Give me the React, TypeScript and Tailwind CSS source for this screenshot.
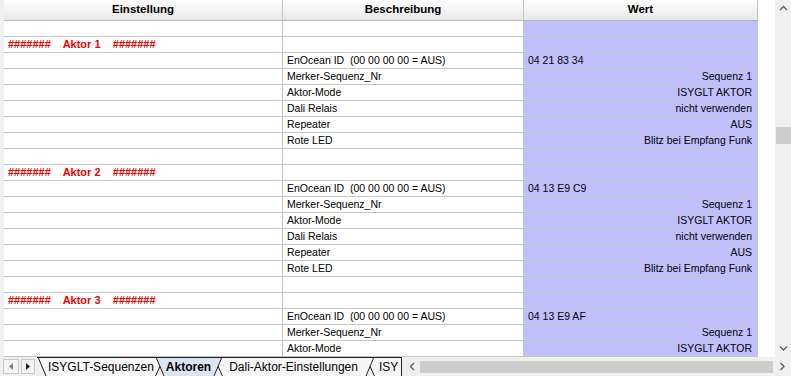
import React from 'react';

type Row =
  | { kind: 'empty' }
  | { kind: 'title'; n: number }
  | { kind: 'prop'; desc: string; val: string; left?: boolean };

const props = (id: string): Row[] => [
  { kind: 'prop', desc: 'EnOcean ID  (00 00 00 00 = AUS)', val: id, left: true },
  { kind: 'prop', desc: 'Merker-Sequenz_Nr', val: 'Sequenz 1' },
  { kind: 'prop', desc: 'Aktor-Mode', val: 'ISYGLT AKTOR' },
  { kind: 'prop', desc: 'Dali Relais', val: 'nicht verwenden' },
  { kind: 'prop', desc: 'Repeater', val: 'AUS' },
  { kind: 'prop', desc: 'Rote LED', val: 'Blitz bei Empfang Funk' },
];

const rows: Row[] = [
  { kind: 'empty' },
  { kind: 'title', n: 1 },
  ...props('04 21 83 34'),
  { kind: 'empty' },
  { kind: 'title', n: 2 },
  ...props('04 13 E9 C9'),
  { kind: 'empty' },
  { kind: 'title', n: 3 },
  ...props('04 13 E9 AF').slice(0, 3),
];

function Chevron({ dir }: { dir: 'up' | 'down' | 'left' | 'right' }) {
  const d = {
    up: 'M1 5 L4.5 1.5 L8 5',
    down: 'M1 1.5 L4.5 5 L8 1.5',
    left: 'M5 1 L1.5 4.5 L5 8',
    right: 'M1.5 1 L5 4.5 L1.5 8',
  }[dir];
  const vert = dir === 'up' || dir === 'down';
  return (
    <svg width={vert ? 9 : 7} height={vert ? 7 : 9} viewBox={vert ? '0 0 9 7' : '0 0 7 9'}>
      <path d={d} fill="none" stroke="#606060" strokeWidth="1.4" />
    </svg>
  );
}

// slanted tab edge; front = which side is drawn in front
function TabEdge({ leftBg, rightBg, front }: { leftBg?: string; rightBg?: string; front: 'left' | 'right' | 'none' }) {
  return (
    <svg width="10" height="19" viewBox="0 0 10 19" className="shrink-0">
      {front === 'right' && (
        <>
          {leftBg && <polygon points="0,0 4.5,9.5 0,19" fill={leftBg} />}
          <polygon points="1,0 10,0 10,19 9,19" fill={rightBg} />
          <line x1="0.5" y1="19" x2="5" y2="9.5" stroke="#202020" strokeWidth="1" />
          <line x1="1" y1="0" x2="9" y2="19" stroke="#202020" strokeWidth="1" />
        </>
      )}
      {front === 'left' && (
        <>
          {rightBg && <polygon points="10,0 10,19 5.5,9.5" fill={rightBg} />}
          <polygon points="0,0 9,0 1,19 0,19" fill={leftBg} />
          <line x1="9.5" y1="19" x2="5" y2="9.5" stroke="#202020" strokeWidth="1" />
          <line x1="9" y1="0" x2="1" y2="19" stroke="#202020" strokeWidth="1" />
        </>
      )}
      {front === 'none' && (
        <>
          <polygon points="1,0 10,0 10,19 9,19" fill={rightBg} />
          <line x1="1" y1="0" x2="9" y2="19" stroke="#202020" strokeWidth="1" />
        </>
      )}
      <line x1="0" y1="0.5" x2="10" y2="0.5" stroke="#202020" strokeWidth="1" />
    </svg>
  );
}

function TableRow({ row }: { row: Row }) {
  const cell = 'h-full border-r border-[#c4c4c4] flex items-center px-[4px] whitespace-pre';
  return (
    <div className="flex h-[16px] border-b border-[#c4c4c4] shrink-0">
      <div className={`${cell} w-[279px]`}>
        {row.kind === 'title' && (
          <span className="text-[#f00000] font-bold text-[11px]">{`#######    Aktor ${row.n}    #######`}</span>
        )}
      </div>
      <div className={`${cell} w-[241px]`}>{row.kind === 'prop' ? row.desc : ''}</div>
      <div className={`${cell} w-[234px] bg-[#c0c0ff] ${row.kind === 'prop' && !row.left ? 'justify-end pr-[5px]' : ''}`}>
        {row.kind === 'prop' ? row.val : ''}
      </div>
    </div>
  );
}

export default function App() {
  const tabBg = '#f7f7f7';
  const activeBg = '#dbe5f1';
  return (
    <div className="w-[791px] h-[376px] overflow-hidden bg-white flex flex-col font-['Liberation_Sans',Arial,sans-serif] text-[10.5px] text-black">
      <div className="flex h-[357px] shrink-0">
        {/* row header strip */}
        <div className="w-[4px] bg-[#f0f0f0] shrink-0" />

        {/* table */}
        <div className="w-[754px] flex flex-col shrink-0">
          <div className="flex h-[21px] border-b border-[#b8b8b8] bg-linear-to-b from-white to-[#e8e8e8] font-bold text-[11.5px] shrink-0">
            <div className="w-[279px] border-r border-[#c4c4c4] flex items-center justify-center">Einstellung</div>
            <div className="w-[241px] border-r border-[#c4c4c4] flex items-center justify-center">Beschreibung</div>
            <div className="w-[234px] border-r border-[#c4c4c4] flex items-center justify-center">Wert</div>
          </div>
          {rows.map((r, i) => (
            <TableRow key={i} row={r} />
          ))}
        </div>

        <div className="w-[17px] shrink-0" />

        {/* vertical scrollbar */}
        <div className="w-[16px] bg-[#f0f0f0] flex flex-col items-center shrink-0">
          <div className="h-[17px] flex items-center justify-center">
            <Chevron dir="up" />
          </div>
          <div className="flex-1 w-full pt-[110px]">
            <div className="h-[17px] w-[15px] ml-[1px] bg-[#cdcdcd]" />
          </div>
          <div className="h-[17px] flex items-center justify-center">
            <Chevron dir="down" />
          </div>
        </div>
      </div>

      {/* sheet tabs + horizontal scrollbar */}
      <div className="flex h-[19px] bg-[#f0f0f0] shrink-0 text-[12px]">
        <div className="flex items-center gap-[2px] pl-[3px] w-[37px] shrink-0">
          <div className="w-[16px] h-[15px] border border-[#c8c8c8] bg-[#f4f4f4] flex items-center justify-center">
            <svg width="4" height="7" viewBox="0 0 4 7">
              <polygon points="4,0 0,3.5 4,7" fill="#808080" />
            </svg>
          </div>
          <div className="w-[14px] h-[15px] border border-[#c8c8c8] bg-[#f4f4f4] flex items-center justify-center">
            <svg width="4" height="7" viewBox="0 0 4 7">
              <polygon points="0,0 4,3.5 0,7" fill="#202020" />
            </svg>
          </div>
        </div>

        <div className="flex w-[365px] shrink-0 overflow-hidden border-r border-[#202020]">
          <TabEdge front="none" rightBg={tabBg} />
          <div className="flex items-center px-[1px] bg-[#f7f7f7] border-t border-[#202020] whitespace-nowrap">ISYGLT-Sequenzen</div>
          <TabEdge front="right" leftBg={tabBg} rightBg={activeBg} />
          <div className="flex items-center pl-[1px] pr-[2px] bg-[#dbe5f1] border-t border-[#202020] font-bold whitespace-nowrap">Aktoren</div>
          <TabEdge front="left" leftBg={activeBg} rightBg={tabBg} />
          <div className="flex items-center pl-[6px] pr-[7px] bg-[#f7f7f7] border-t border-[#202020] whitespace-nowrap">Dali-Aktor-Einstellungen</div>
          <TabEdge front="left" leftBg={tabBg} rightBg={tabBg} />
          <div className="flex-1 flex items-center pl-[4px] bg-[#f7f7f7] border-t border-[#202020] whitespace-nowrap">ISY</div>
        </div>

        <div className="flex-1 flex items-center">
          <div className="w-[16px] flex justify-center ml-[2px]">
            <Chevron dir="left" />
          </div>
          <div className="flex-1 h-[12px] bg-[#cdcdcd]" />
          <div className="w-[18px] flex justify-center">
            <Chevron dir="right" />
          </div>
        </div>
      </div>
    </div>
  );
}
